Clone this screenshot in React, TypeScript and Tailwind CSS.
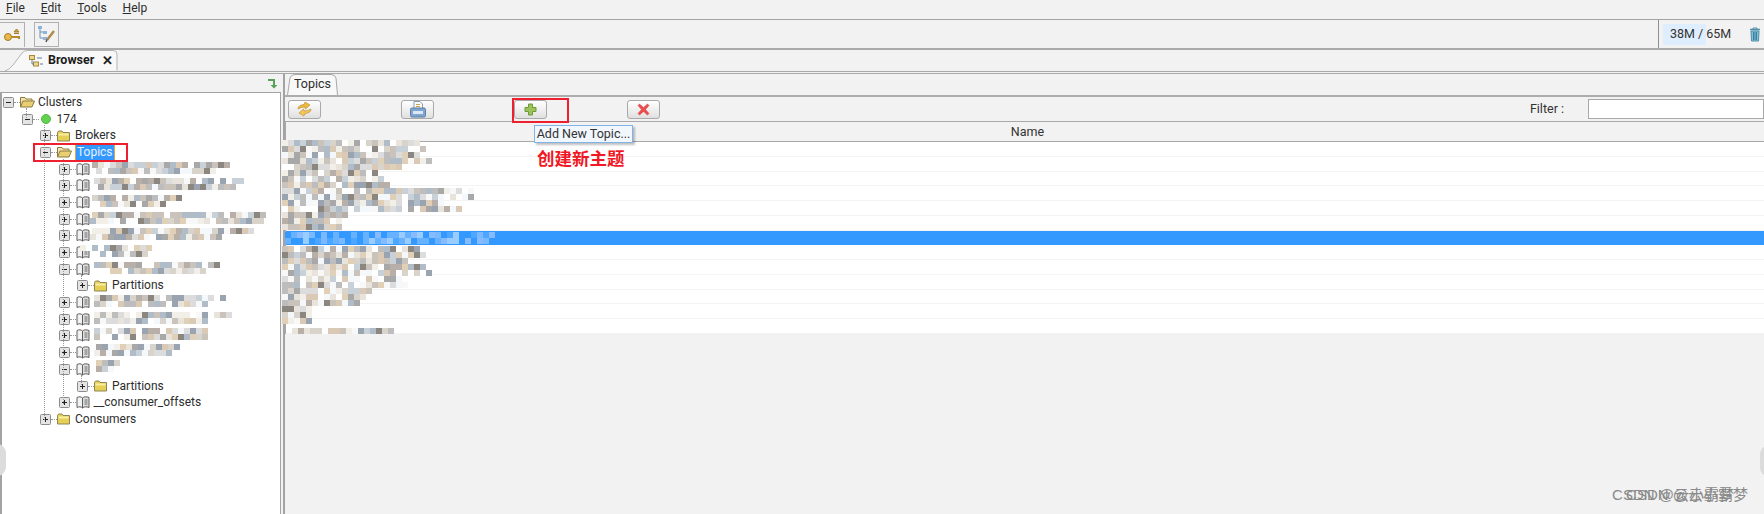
import { ReactNode } from "react";

const FONT = "font-['Roboto','Noto_Sans_CJK_SC',sans-serif]";

// mosaic palette, picked off the blurred topic names
const PALETTE = [
    "#b8b0a8", "#c9c3bb", "#a8a8a8", "#d8d4cc", "#e8e4dc", "#f2efe8", "#ffffff", "#ffffff", "#f8f8f8",
    "#c8d0d8", "#b0bcc8", "#e0d0b8", "#8c8680", "#9aa4b0", "#dcdcdc", "#f4f8fb", "#d9c9b5", "#bdbdbd",
];
const BLUES = ["#3399ff", "#66b2ff", "#86bbff", "#4da6ff", "#99ccff", "#3399ff", "#7ab8ff"];

let seed = 17;
const rand = () => {
    seed = (seed * 16807) % 2147483647;
    return seed / 2147483647;
};

// [top, x start, x end]
const MOSAIC_LINES: number[][] = [
    // tree
    [162, 92, 226], [168, 96, 215], [178, 94, 240], [184, 98, 236], [195, 92, 180], [201, 100, 165],
    [212, 92, 272], [218, 90, 262], [228, 92, 250], [234, 90, 222], [245, 80, 148], [251, 100, 148],
    [262, 94, 215], [268, 110, 205], [295, 94, 222], [301, 94, 212], [312, 94, 228], [318, 94, 205],
    [328, 94, 205], [334, 94, 208], [344, 96, 175], [350, 94, 172], [360, 96, 118], [366, 96, 116],
    // table
    [140, 282, 420], [146, 282, 426], [152, 282, 420], [158, 282, 432], [164, 282, 400], [170, 282, 378],
    [176, 282, 380], [182, 282, 390], [188, 282, 472], [194, 282, 476], [200, 282, 440], [206, 282, 462],
    [212, 282, 345], [218, 282, 340], [224, 282, 340],
    [246, 282, 415], [252, 282, 422], [258, 282, 405], [264, 282, 426], [270, 282, 432], [276, 282, 400],
    [282, 282, 405], [288, 282, 372], [294, 282, 362], [300, 282, 360], [306, 282, 310], [312, 282, 312],
    [318, 282, 310], [328, 292, 390],
];

const cells: { x: number; y: number; fill: string }[] = [];
MOSAIC_LINES.forEach(([y, from, to]) => {
    for (let x = from; x < to; x += 6) {
        cells.push({ x, y, fill: PALETTE[Math.floor(rand() * PALETTE.length)] });
    }
});
[232, 238].forEach((y) => {
    for (let x = 285; x < 490; x += 6) {
        cells.push({ x, y, fill: BLUES[Math.floor(rand() * BLUES.length)] });
    }
});

const FolderClosed = () => (
    <svg width="13" height="12" viewBox="0 0 13 12">
        <path d="M0.5 2.5 L1.5 1 H5 L6 2.5 H12.5 V11 H0.5 Z" fill="#e6cf55" stroke="#8f8557" />
        <rect x="1.5" y="3.5" width="10" height="2" fill="#f8eea0" />
    </svg>
);

const FolderOpen = () => (
    <svg width="15" height="12" viewBox="0 0 15 12">
        <path d="M0.5 11 V1.5 H5 L6 3 H12 V5" fill="#f2e4a8" stroke="#8d7a45" />
        <path d="M0.5 11 L3 5 H14.5 L12 11 Z" fill="#e9cf72" stroke="#8d7a45" />
    </svg>
);

const Book = () => (
    <svg width="14" height="13" viewBox="0 0 14 13">
        <path d="M1 1.5 C3 0.5 5 0.5 6.5 2 V12 C5 10.5 3 10.5 1 11.5 Z" fill="#f2f2f2" stroke="#5c5c5c" />
        <path d="M6.5 2 C8 0.5 10.5 0.5 13 1.5 V11.5 C10.5 10.5 8 10.5 6.5 12 Z" fill="#dedede" stroke="#5c5c5c" />
        <path d="M8.5 4 H11.5 M8.5 6 H11.5 M8.5 8 H11.5" stroke="#6a6a6a" />
    </svg>
);

const GreenBall = () => (
    <div className="ml-[2px] h-[10px] w-[10px] rounded-full border border-[#58b548] bg-[#5fd34d]" />
);

const Expander = ({ open }: { open: boolean }) => (
    <svg width="11" height="11" viewBox="0 0 11 11" className="shrink-0">
        <rect x="0.5" y="0.5" width="10" height="10" rx="1" fill="#e4e4e4" stroke="#8c8c8c" />
        <path d={open ? "M3 5.5 H8" : "M3 5.5 H8 M5.5 3 V8"} stroke="#222222" />
    </svg>
);

const TreeRow = ({
    depth,
    open,
    icon,
    label,
    selected,
}: {
    depth: number;
    open: boolean;
    icon: ReactNode;
    label?: string;
    selected?: boolean;
}) => {
    const marginByDepth = ["ml-[1px]", "ml-[19.5px]", "ml-[38px]", "ml-[56.5px]", "ml-[75px]"];
    return (
        <div className={`flex h-[16.7px] items-center ${marginByDepth[depth]}`}>
            <Expander open={open} />
            <div className="w-[6px] shrink-0 border-t border-dotted border-[#999999]" />
            <div className="w-[18px] shrink-0">{icon}</div>
            {label && (
                <span
                    className={
                        selected
                            ? "border-x border-[#e8a33c] bg-[#3399ff] px-[1px] text-[12px] leading-[15px] text-[#e8f3ff]"
                            : "text-[12px] leading-[15px] text-[#2d2d2d]"
                    }
                >
                    {label}
                </span>
            )}
        </div>
    );
};

const ToolButton = ({ children }: { children: ReactNode }) => (
    <button className="flex h-[19px] w-[33px] items-center justify-center rounded-[3px] border border-[#a9a9a9] bg-gradient-to-b from-white to-[#e0e0e0]">
        {children}
    </button>
);

const MenuItem = ({ first, rest }: { first: string; rest: string }) => (
    <span className="text-[12px] leading-[14px] text-[#2d2d2d]">
        <span className="underline">{first}</span>
        {rest}
    </span>
);

const topics = [0, 1, 2, 3, 4, 5];
const topics2 = [0, 1, 2, 3];
const tableRows = [0, 1, 2, 3, 4, 5, 6, 7, 8, 9, 10, 11, 12];

export default function App() {
    return (
        <div className={`relative flex h-screen w-full flex-col overflow-hidden bg-[#f2f2f2] ${FONT}`}>
            {/* Menu */}
            <div className="flex h-[20px] shrink-0 items-start gap-[16px] border-b border-[#a3a3a3] pl-[6px] pt-[1px]">
                <MenuItem first="F" rest="ile" />
                <MenuItem first="E" rest="dit" />
                <MenuItem first="T" rest="ools" />
                <MenuItem first="H" rest="elp" />
            </div>

            {/* Main toolbar */}
            <div className="flex h-[30px] shrink-0 items-center border-b-2 border-[#ababab]">
                <div className="flex h-[25px] w-[25px] items-center justify-center border-r border-t border-[#b0b0b0]">
                    <svg width="18" height="14" viewBox="0 0 18 14">
                        <circle cx="5" cy="9" r="3.5" fill="#e8b84d" stroke="#a67c24" />
                        <path d="M8 9 H16 V11" fill="none" stroke="#b78a2c" strokeWidth="2" />
                        <path d="M11 4 L13.5 1 L16 4 Z M11 5.5 H16" fill="#c9a552" stroke="#a67c24" />
                    </svg>
                </div>
                <div className="ml-[9px] flex h-[25px] w-[25px] items-center justify-center border border-[#b0b0b0]">
                    <svg width="19" height="18" viewBox="0 0 19 18">
                        <path d="M3 2 V13 H7 M3 7 H7" fill="none" stroke="#6f8fb0" />
                        <rect x="1" y="1" width="4" height="3" fill="#8db4dc" />
                        <rect x="6" y="6" width="4" height="3" fill="#8db4dc" />
                        <rect x="6" y="12" width="4" height="3" fill="#8db4dc" />
                        <path d="M10 15 L17 6" stroke="#b08a4a" strokeWidth="2.5" />
                        <path d="M9 17 L10 14.5" stroke="#555555" strokeWidth="1.5" />
                    </svg>
                </div>
                <div className="ml-auto flex h-full w-[106px] items-center border-l border-[#8f8f8f] pl-[4px]">
                    <div className="relative flex h-[21px] items-center">
                        <div className="h-full w-[43px] bg-[#dfeeff]" />
                        <span className="absolute left-[7px] whitespace-nowrap text-[12.5px] text-[#333333]">38M / 65M</span>
                    </div>
                    <svg width="12" height="15" viewBox="0 0 12 15" className="ml-[43px]">
                        <path d="M1 2.5 H11" stroke="#4f8fa8" strokeWidth="1.5" />
                        <path d="M4 2 V1 H8 V2" fill="none" stroke="#4f8fa8" />
                        <path d="M2 4 H10 L9.5 14 H2.5 Z" fill="#7fc0dc" stroke="#4f8fa8" />
                        <path d="M4.5 5 V13 M6 5 V13 M7.5 5 V13" stroke="#3f7f9c" />
                    </svg>
                </div>
            </div>

            {/* Perspective tabs */}
            <div className="flex h-[24px] shrink-0 items-end border-b-[3px] border-double border-[#a8a8a8]">
                <div className="relative ml-[5px] flex h-[21px] w-[113px] items-center">
                    <svg width="113" height="21" viewBox="0 0 113 21" className="absolute inset-0">
                        <path d="M-5 20.5 H1 Q4 20 8 15 L17 3 Q19 0.5 23 0.5 H108 Q112 0.5 112 4 V20.5" fill="#f8f8f8" stroke="#b5b5b5" />
                    </svg>
                    <svg width="14" height="12" viewBox="0 0 14 12" className="relative ml-[24px]">
                        <rect x="0.5" y="0.5" width="5" height="4" fill="#f0d68a" stroke="#a58a3c" />
                        <rect x="4.5" y="7" width="5" height="4" fill="#f0d68a" stroke="#a58a3c" />
                        <path d="M3 5 V9 H5 M8 3 H13 M11 9 H14" fill="none" stroke="#5b7fa5" />
                    </svg>
                    <span className="relative ml-[5px] text-[12.5px] font-bold text-[#1c1c1c]">Browser</span>
                    <span className="relative ml-[8px] text-[13px] font-bold leading-none text-[#222222]">✕</span>
                </div>
            </div>

            <div className="flex min-h-0 flex-1">
                {/* Left panel */}
                <div className="flex w-[281px] shrink-0 flex-col">
                    <div className="flex h-[18px] shrink-0 items-center justify-end pr-[3px]">
                        <svg width="11" height="11" viewBox="0 0 11 11">
                            <path d="M1 2 H7 V8" fill="none" stroke="#58a05a" strokeWidth="2" />
                            <path d="M3.5 7 H10.5 L7 10.5 Z" fill="#58a05a" />
                        </svg>
                    </div>
                    <div className="relative flex-1 border-l-2 border-r border-t border-[#a3a3a3] bg-white pt-[1px]">
                        <div className="absolute left-[24px] top-[15px] h-[10px] border-l border-dotted border-[#999999]" />
                        <div className="absolute left-[42px] top-[32px] h-[295px] border-l border-dotted border-[#999999]" />
                        <div className="absolute left-[61px] top-[66px] h-[245px] border-l border-dotted border-[#999999]" />
                        <div className="absolute left-[79px] top-[182px] h-[10px] border-l border-dotted border-[#999999]" />
                        <div className="absolute left-[79px] top-[282px] h-[10px] border-l border-dotted border-[#999999]" />
                        <TreeRow depth={0} open icon={<FolderOpen />} label="Clusters" />
                        <TreeRow depth={1} open icon={<GreenBall />} label="174" />
                        <TreeRow depth={2} open={false} icon={<FolderClosed />} label="Brokers" />
                        <TreeRow depth={2} open icon={<FolderOpen />} label="Topics" selected />
                        {topics.map((t) => (
                            <TreeRow key={t} depth={3} open={false} icon={<Book />} />
                        ))}
                        <TreeRow depth={3} open icon={<Book />} />
                        <TreeRow depth={4} open={false} icon={<FolderClosed />} label="Partitions" />
                        {topics2.map((t) => (
                            <TreeRow key={t} depth={3} open={false} icon={<Book />} />
                        ))}
                        <TreeRow depth={3} open icon={<Book />} />
                        <TreeRow depth={4} open={false} icon={<FolderClosed />} label="Partitions" />
                        <TreeRow depth={3} open={false} icon={<Book />} label="__consumer_offsets" />
                        <TreeRow depth={2} open={false} icon={<FolderClosed />} label="Consumers" />
                    </div>
                </div>

                {/* Splitter */}
                <div className="w-[4px] shrink-0 border-r-2 border-[#a3a3a3]" />

                {/* Right panel */}
                <div className="flex min-w-0 flex-1 flex-col">
                    <div className="flex h-[23px] shrink-0 items-end border-b-2 border-[#adadad] pl-[2px]">
                        <div className="relative flex h-[21px] w-[51px] items-center justify-center">
                            <svg width="51" height="21" viewBox="0 0 51 21" className="absolute inset-0">
                                <path d="M0.5 21 L3 4 Q4 0.5 8 0.5 H44 Q48 0.5 49 4 L50.5 21" fill="#f8f8f8" stroke="#a8a8a8" />
                            </svg>
                            <span className="relative text-[12.5px] text-[#2d2d2d]">Topics</span>
                        </div>
                    </div>
                    <div className="flex h-[25px] shrink-0 items-center gap-[80px] border-b border-[#a8a8a8] pl-[3px]">
                        <ToolButton>
                            <svg width="17" height="16" viewBox="0 0 17 16">
                                <path d="M2 8 Q2 4 8 3.5 L9 1 L14 4 L9.5 8 L9 6 Q5 6 2 8 Z" fill="#eeb93f" stroke="#b9862a" strokeWidth="0.6" />
                                <path d="M15 8 Q15 12 9 12.5 L8 15 L3 12 L7.5 8 L8 10 Q12 10 15 8 Z" fill="#f3c75a" stroke="#b9862a" strokeWidth="0.6" />
                            </svg>
                        </ToolButton>
                        <ToolButton>
                            <svg width="16" height="17" viewBox="0 0 16 17">
                                <path d="M4 0.5 H10 L12.5 3 V8 H4 Z" fill="#fbfbfb" stroke="#8a9fb5" />
                                <path d="M6 3.5 H10 M6 5.5 H10" stroke="#c9a552" />
                                <rect x="0.5" y="7" width="15" height="9" rx="1.5" fill="#7fa6cf" stroke="#5d7fa5" />
                                <rect x="3" y="10" width="10" height="3" fill="#dce8f4" />
                            </svg>
                        </ToolButton>
                        <ToolButton>
                            <svg width="13" height="13" viewBox="0 0 13 13">
                                <path d="M4.5 1 H8.5 V4.5 H12 V8.5 H8.5 V12 H4.5 V8.5 H1 V4.5 H4.5 Z" fill="#9cc35a" stroke="#6f9a3a" />
                            </svg>
                        </ToolButton>
                        <ToolButton>
                            <svg width="13" height="13" viewBox="0 0 13 13">
                                <path d="M2.5 1 L6.5 4.5 L10.5 1 L12 2.5 L8.5 6.5 L12 10.5 L10.5 12 L6.5 8.5 L2.5 12 L1 10.5 L4.5 6.5 L1 2.5 Z" fill="#ee4c4c" stroke="#d83a3a" strokeWidth="0.5" />
                            </svg>
                        </ToolButton>
                        <div className="ml-auto flex items-center">
                            <span className="text-[12.5px] text-[#333333]">Filter :</span>
                            <div className="ml-[24px] h-[20px] w-[176px] border border-[#a8a8a8] bg-white" />
                        </div>
                    </div>

                    {/* Topics table */}
                    <div className="flex h-[20px] shrink-0 items-center justify-center border-b border-l border-[#a8a8a8] pl-[5px] pt-[2px]">
                        <span className="text-[12.5px] text-[#333333]">Name</span>
                    </div>
                    <div className="border-l border-[#a8a8a8] bg-white">
                        {tableRows.map((row) => (
                            <div
                                key={row}
                                className={
                                    row === 6
                                        ? "h-[14.77px] bg-[#3399ff]"
                                        : "h-[14.77px] border-b border-[#f4f4f4]"
                                }
                            />
                        ))}
                    </div>
                </div>
            </div>

            {/* Blurred topic names */}
            <svg width="1764" height="514" className="pointer-events-none absolute left-0 top-0">
                {cells.map((c, i) => (
                    <rect key={i} x={c.x} y={c.y} width="6" height="6" fill={c.fill} />
                ))}
            </svg>

            {/* Red annotations */}
            <div className="absolute left-[33px] top-[143px] h-[19px] w-[95px] border-2 border-[#ee2030]" />
            <div className="absolute left-[512px] top-[98px] h-[25px] w-[57px] border-2 border-[#ee2030]" />
            <span className="absolute left-[537px] top-[147px] whitespace-nowrap text-[17.5px] font-bold leading-[24px] text-[#f01824]">
                创建新主题
            </span>

            {/* Tooltip */}
            <div className="absolute left-[534px] top-[125px] flex h-[18px] w-[99px] items-center justify-center border border-[#7fb4ea] bg-[#f2f7fd] text-[12.5px] text-[#333333] shadow-[2px_2px_2px_rgba(0,0,0,0.25)]">
                Add New Topic...
            </div>

            {/* Side arrows and watermark */}
            <div className="absolute -left-[12px] top-[444px] h-[32px] w-[18px] rounded-full bg-[#dcdcdc]" />
            <div className="absolute -right-[12px] top-[446px] h-[30px] w-[16px] rounded-full bg-[#dcdcdc]" />
            <span className="absolute right-[30px] top-[484px] whitespace-nowrap font-['Liberation_Sans','Noto_Sans_CJK_SC',sans-serif] text-[15px] text-[#8a8a8a]">
                CSDN @云小霸梦
            </span>
            <span className="absolute right-[16px] top-[484px] whitespace-nowrap font-['Liberation_Sans','Noto_Sans_CJK_SC',sans-serif] text-[15px] text-[#8a8a8a]">
                CSDN @云小霸梦
            </span>
        </div>
    );
}
